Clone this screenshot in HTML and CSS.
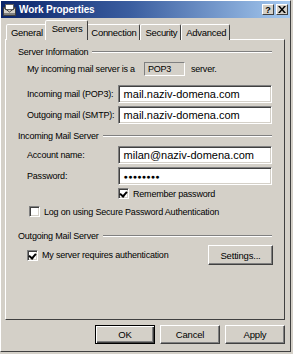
FILE: index.html
```html
<!DOCTYPE html>
<html lang="en">
<head>
  <meta charset="UTF-8" />
  <title>Work Properties</title>
  <link rel="stylesheet" href="styles.css">
</head>
<body>
  <div class="window">
    <div class="titlebar">
      <svg class="app-icon" width="13" height="12" viewBox="0 0 13 12">
        <rect x="0.5" y="3.5" width="12" height="8" fill="#d4d0c8" stroke="#404040"/>
        <rect x="2.5" y="0.5" width="8" height="5" fill="#ffffff" stroke="#606060"/>
        <path d="M0.5 3.5 L6.5 8 L12.5 3.5" fill="none" stroke="#404040"/>
        <rect x="1" y="9" width="11" height="2" fill="#808080"/>
      </svg>
      <span class="title">Work Properties</span>
      <div class="caption-btns">
        <span class="cbtn">?</span>
        <span class="cbtn close">
          <svg width="8" height="7" viewBox="0 0 8 7"><path d="M0 0h2l2 2.5L6 0h2L5 3.5 8 7H6L4 4.5 2 7H0l3-3.5z" fill="#000"/></svg>
        </span>
      </div>
    </div>

    <div class="content">
      <div class="tabs">
        <span class="tab">General</span>
        <span class="tab active">Servers</span>
        <span class="tab">Connection</span>
        <span class="tab">Security</span>
        <span class="tab">Advanced</span>
      </div>

      <div class="panel">
        <div class="group"><span>Server Information</span></div>
        <div class="row info">
          <span>My incoming mail server is a</span>
          <span class="readonly">POP3</span>
          <span>server.</span>
        </div>
        <div class="row field first">
          <label>Incoming mail (POP3):</label>
          <span class="input">mail.naziv-domena.com</span>
        </div>
        <div class="row field">
          <label>Outgoing mail (SMTP):</label>
          <span class="input">mail.naziv-domena.com</span>
        </div>

        <div class="group">Incoming Mail Server</div>
        <div class="row field">
          <label>Account name:</label>
          <span class="input">milan@naziv-domena.com</span>
        </div>
        <div class="row field">
          <label>Password:</label>
          <span class="input password">&#9679;&#9679;&#9679;&#9679;&#9679;&#9679;&#9679;&#9679;</span>
        </div>
        <div class="row check remember">
          <span class="box checked"></span>
          <span>Remember password</span>
        </div>
        <div class="row check spa">
          <span class="box"></span>
          <span>Log on using Secure Password Authentication</span>
        </div>

        <div class="group outgoing">Outgoing Mail Server</div>
        <div class="row check auth">
          <span class="box checked"></span>
          <span class="grow">My server requires authentication</span>
          <span class="btn settings">Settings...</span>
        </div>
      </div>

      <div class="buttons">
        <span class="btn default">OK</span>
        <span class="btn">Cancel</span>
        <span class="btn">Apply</span>
      </div>
    </div>
  </div>
</body>
</html>
```

FILE: styles.css
```css
:root {
  --face: #d4d0c8;
  --shadow: #808080;
  --dark: #404040;
}

body {
  margin: 0;
  background: var(--face);
  font-family: "Liberation Sans", Arial, sans-serif;
  font-size: 9px;
  letter-spacing: -0.2px;
  color: #000000;
}

.window {
  width: 291px;
  height: 352px;
  box-sizing: border-box;
  background: var(--face);
  border: 1px solid;
  border-color: #ffffff var(--dark) var(--dark) #ffffff;
}

/* TITLE BAR */
.titlebar {
  height: 17px;
  display: flex;
  align-items: center;
  padding: 0 2px 0 2px;
  background: linear-gradient(to right, #0a246a, #3b5ea0 45%, #a6caf0);
}

.app-icon {
  margin-right: 3px;
}

.title {
  flex: 1;
  color: #ffffff;
  font-weight: bold;
  font-size: 10px;
  letter-spacing: -0.1px;
}

.caption-btns {
  display: flex;
  gap: 2px;
}

.cbtn {
  width: 12px;
  height: 11px;
  box-sizing: border-box;
  display: flex;
  align-items: center;
  justify-content: center;
  background: var(--face);
  border: 1px solid;
  border-color: #ffffff var(--dark) var(--dark) #ffffff;
  font-weight: bold;
  font-size: 9px;
}

/* TABS */
.content {
  padding: 0 5px 0 4px;
}

.tabs {
  display: flex;
  align-items: flex-end;
  height: 22px;
  padding-left: 1px;
  position: relative;
  z-index: 1;
  margin-bottom: -1px;
}

.tab {
  height: 16px;
  box-sizing: border-box;
  padding: 2px 3px 0 4px;
  border: 1px solid;
  border-bottom: none;
  border-color: #ffffff var(--dark) transparent #ffffff;
  border-radius: 2px 2px 0 0;
  background: var(--face);
  font-size: 9.5px;
  letter-spacing: -0.3px;
}

.tab.active {
  height: 20px;
  padding: 2px 5px 0 6px;
  margin: 0 -2px;
  position: relative;
  z-index: 2;
}

/* PANEL */
.panel {
  height: 281px;
  box-sizing: border-box;
  border: 1px solid;
  border-color: #ffffff var(--dark) var(--dark) #ffffff;
  padding: 5px 12px 0 12px;
}

.group {
  height: 14px;
  display: flex;
  align-items: center;
  gap: 4px;
  margin-top: 5px;
}

.group:first-child {
  margin-top: 0;
}

.group::after {
  content: "";
  flex: 1;
  border-top: 1px solid var(--shadow);
  border-bottom: 1px solid #ffffff;
}

.group.outgoing {
  margin-top: 11px;
}

.row {
  display: flex;
  align-items: center;
  padding-left: 9px;
}

.info {
  height: 14px;
  margin-top: 3px;
}

.readonly {
  width: 41px;
  height: 14px;
  box-sizing: border-box;
  margin: 0 6px 0 9px;
  padding: 1px 3px;
  border: 1px solid;
  border-color: var(--shadow) #ffffff #ffffff var(--shadow);
}

.field {
  height: 18px;
  margin-top: 3px;
}

.field.first {
  margin-top: 9px;
}

.field label {
  width: 91px;
}

.input {
  width: 155px;
  height: 18px;
  box-sizing: border-box;
  background: #ffffff;
  border: 1px solid;
  border-color: var(--shadow) #ffffff #ffffff var(--shadow);
  box-shadow: inset 1px 1px 0 var(--dark), inset -1px -1px 0 var(--face);
  padding: 2px 5px 0;
  font-size: 11px;
  letter-spacing: 0;
}

.input.password {
  font-size: 7px;
  letter-spacing: 0.3px;
  padding-top: 5px;
}

.check {
  height: 13px;
  gap: 4px;
}

.box {
  width: 11px;
  height: 11px;
  box-sizing: border-box;
  background: #ffffff;
  border: 1px solid;
  border-color: var(--shadow) #ffffff #ffffff var(--shadow);
  box-shadow: inset 1px 1px 0 var(--dark), inset -1px -1px 0 var(--face);
  position: relative;
}

.box.checked::after {
  content: "";
  position: absolute;
  left: 2px;
  top: 1px;
  width: 3px;
  height: 5px;
  border: solid #000000;
  border-width: 0 2px 2px 0;
  transform: rotate(40deg);
}

.remember {
  margin-top: 2px;
  padding-left: 100px;
}

.spa {
  margin-top: 5px;
  padding-left: 11px;
}

.auth {
  height: 20px;
  margin-top: 2px;
}

.grow {
  flex: 1;
}

/* BUTTONS */
.btn {
  height: 19px;
  box-sizing: border-box;
  display: flex;
  align-items: center;
  justify-content: center;
  background: var(--face);
  border: 1px solid;
  border-color: #ffffff var(--dark) var(--dark) #ffffff;
  box-shadow: inset -1px -1px 0 var(--shadow);
  font-size: 9.5px;
}

.settings {
  width: 65px;
  height: 20px;
  margin-right: -1px;
}

.buttons {
  display: flex;
  justify-content: flex-end;
  gap: 5px;
  margin-top: 5px;
  padding-right: 0;
}

.buttons .btn {
  width: 60px;
}

.btn.default {
  border: 1px solid #000000;
  box-shadow: inset 1px 1px 0 #ffffff, inset -1px -1px 0 var(--dark), inset -2px -2px 0 var(--shadow);
}
```
